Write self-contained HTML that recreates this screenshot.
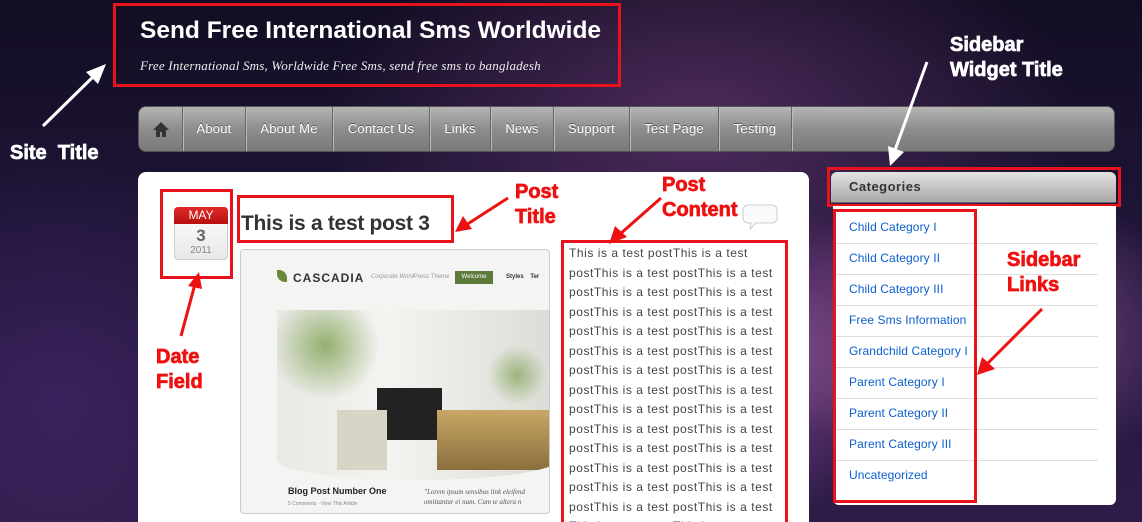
<!DOCTYPE html>
<html style="width:1142px;height:522px;overflow:hidden"><head><meta charset="utf-8"><style>
*{margin:0;padding:0;box-sizing:border-box}
body{width:1142px;height:522px;overflow:hidden;position:relative;font-family:"Liberation Sans",sans-serif;
background:
radial-gradient(ellipse 380px 220px at 650px 360px,rgba(230,150,220,.75),rgba(160,80,170,.3) 55%,transparent 80%),
radial-gradient(ellipse 300px 200px at 980px 330px,rgba(200,120,200,.6),transparent 75%),
radial-gradient(ellipse 500px 300px at 700px 120px,rgba(110,60,120,.6),transparent 75%),
radial-gradient(ellipse 300px 300px at 60px 400px,rgba(70,40,110,.6),transparent 80%),
linear-gradient(180deg,#120d22,#1e1436 40%,#2d1c48);}
.a{position:absolute}
.rb{position:absolute;border:3px solid #e8121a}
.ann{position:absolute;z-index:5;font-weight:bold;font-size:20px;line-height:25px;color:#ee1111;font-family:"Liberation Sans",sans-serif;letter-spacing:0;-webkit-text-stroke:0.7px currentColor}
.annw{color:#fff}
svg{z-index:5}
.nav{left:138px;top:106px;width:977px;height:46px;border-radius:8px;background:linear-gradient(#b5b5b5,#8d8d8d 50%,#7a7a7a);border:1px solid #555}
.nav span{position:absolute;top:0;height:44px;line-height:44px;color:#fff;font-size:13px;text-shadow:0 -1px 0 #555;border-right:1px solid #666;box-shadow:1px 0 0 #bbb;text-align:center;letter-spacing:.2px}
.side a{display:block;position:absolute;left:849px;color:#0b5fcf;font-size:12px;text-decoration:none;letter-spacing:.1px}
.sep{position:absolute;left:835px;width:263px;height:1px;background:#ddd}
.ct{position:absolute;left:569px;width:220px;font-size:12px;line-height:19.5px;color:#444;letter-spacing:.55px;white-space:nowrap;height:278px;overflow:hidden}
</style></head><body>
<div class="rb" style="left:113px;top:3px;width:508px;height:84px"></div>
<div class="a" style="left:140px;top:17px;color:#fff;font-size:24.5px;font-weight:bold">Send Free International Sms Worldwide</div>
<div class="a" style="left:140px;top:58px;color:#eee;font-size:13px;font-style:italic;font-family:'Liberation Serif',serif;letter-spacing:.2px">Free International Sms, Worldwide Free Sms, send free sms to bangladesh</div>

<div class="a nav">
<svg class="a" style="left:13px;top:14px" width="18" height="17"><path d="M9 1L1 9h3v7h4v-5h2v5h4V9h3z" fill="#333"/></svg>
<span style="left:0;width:44px"></span>
<span style="left:44px;width:63px">About</span>
<span style="left:107px;width:87px">About Me</span>
<span style="left:194px;width:97px">Contact Us</span>
<span style="left:291px;width:61px">Links</span>
<span style="left:352px;width:63px">News</span>
<span style="left:415px;width:76px">Support</span>
<span style="left:491px;width:89px">Test Page</span>
<span style="left:580px;width:73px">Testing</span>
</div>

<svg class="a" style="left:40px;top:62px" width="70" height="70"><line x1="3" y1="64" x2="58" y2="10" stroke="#fff" stroke-width="3"/><polygon points="66,2 46,10 58,22" fill="#fff"/></svg>
<div class="ann annw" style="left:10px;top:141px">Site&nbsp; Title</div>
<div class="ann annw" style="left:950px;top:33px">Sidebar<br>Widget Title</div>
<svg class="a" style="left:885px;top:60px" width="50" height="110"><line x1="42" y1="2" x2="10" y2="90" stroke="#fff" stroke-width="3"/><polygon points="5,106 3,86 19,92" fill="#fff"/></svg>

<div class="a" style="left:138px;top:172px;width:671px;height:360px;background:#fff;border-radius:8px"></div>
<div class="rb" style="left:160px;top:189px;width:73px;height:90px"></div>
<div class="a" style="left:174px;top:207px;width:54px;height:53px;border-radius:4px;border:1px solid #ccc;background:linear-gradient(#fff,#e8e8e8)"></div>
<div class="a" style="left:174px;top:207px;width:54px;height:17px;border-radius:4px 4px 0 0;background:linear-gradient(#e02a2a,#b80f0f);color:#fff;font-size:12px;text-align:center;line-height:17px">MAY</div>
<div class="a" style="left:174px;top:226px;width:54px;text-align:center;font-size:17px;font-weight:bold;color:#666">3</div>
<div class="a" style="left:174px;top:245px;width:54px;text-align:center;font-size:10px;color:#888">2011</div>
<div class="rb" style="left:237px;top:195px;width:217px;height:48px"></div>
<div class="a" style="left:241px;top:212px;font-size:21px;color:#333;font-weight:bold;letter-spacing:-.3px">This is a test post 3</div>
<div class="ann" style="left:515px;top:180px">Post<br>Title</div>
<svg class="a" style="left:452px;top:195px" width="60" height="40"><line x1="56" y1="3" x2="14" y2="30" stroke="#e11" stroke-width="3"/><polygon points="3,37 11,21 20,34" fill="#e11"/></svg>
<svg class="a" style="left:742px;top:202px" width="36" height="30"><path d="M6 3h24a5 5 0 015 5v8a5 5 0 01-5 5H14l-6 6 1-6H6a5 5 0 01-5-5V8a5 5 0 015-5z" fill="#fafafa" stroke="#ccc"/></svg>
<div class="ann" style="left:662px;top:173px">Post<br>Content</div>
<svg class="a" style="left:605px;top:195px" width="60" height="52"><line x1="56" y1="3" x2="14" y2="40" stroke="#e11" stroke-width="3"/><polygon points="4,49 10,31 22,42" fill="#e11"/></svg>

<div class="a" style="left:240px;top:249px;width:310px;height:265px;border:1px solid #ccc;border-radius:4px;background:#f4f4f2;overflow:hidden">
<div class="a" style="left:36px;top:20px;width:10px;height:12px;background:#6a8a3a;border-radius:0 8px 0 8px"></div>
<div class="a" style="left:52px;top:21px;font-size:12px;font-weight:bold;color:#333;letter-spacing:1px">CASCADIA</div>
<div class="a" style="left:130px;top:24px;font-size:6px;color:#999;font-style:italic">Corporate WordPress Theme</div>
<div class="a" style="left:214px;top:21px;width:38px;height:13px;background:#5c7a3c;color:#fff;font-size:6px;text-align:center;line-height:13px">Welcome</div>
<div class="a" style="left:265px;top:24px;font-size:6px;color:#333;font-weight:bold">Styles&nbsp;&nbsp;&nbsp;&nbsp;Ter</div>
<div class="a" style="left:36px;top:60px;width:280px;height:170px;background:linear-gradient(90deg,#e8e8e4,#f3f3f0 40%,#dcdcd6);border-radius:0 0 50% 50%/0 0 20px 20px;overflow:hidden">
<div class="a" style="left:100px;top:78px;width:65px;height:52px;background:#222"></div>
<div class="a" style="left:160px;top:100px;width:120px;height:60px;background:linear-gradient(#c9a866,#8a6f3e)"></div>
<div class="a" style="left:60px;top:100px;width:50px;height:60px;background:#d8d4c6"></div>
<div class="a" style="left:0;top:0;width:120px;height:90px;background:radial-gradient(circle at 40% 40%,rgba(110,150,60,.7),transparent 60%)"></div>
<div class="a" style="left:205px;top:30px;width:70px;height:70px;background:radial-gradient(circle,rgba(110,150,60,.6),transparent 60%)"></div>
</div>
<div class="a" style="left:47px;top:236px;font-size:9px;font-weight:bold;color:#222">Blog Post Number One</div>
<div class="a" style="left:47px;top:251px;font-size:5px;color:#888">5 Comments · View This Article</div>
<div class="a" style="left:183px;top:237px;font-size:7px;color:#555;font-style:italic;font-family:'Liberation Serif',serif;line-height:10px;white-space:nowrap">"Lorem ipsum sensibus link eleifend<br>omittantur ei nam. Cum te altera n</div>
</div>

<div class="rb" style="left:561px;top:240px;width:227px;height:290px"></div>
<div class="ct" style="top:244px">This is a test postThis is a test<br>postThis is a test postThis is a test<br>postThis is a test postThis is a test<br>postThis is a test postThis is a test<br>postThis is a test postThis is a test<br>postThis is a test postThis is a test<br>postThis is a test postThis is a test<br>postThis is a test postThis is a test<br>postThis is a test postThis is a test<br>postThis is a test postThis is a test<br>postThis is a test postThis is a test<br>postThis is a test postThis is a test<br>postThis is a test postThis is a test<br>postThis is a test postThis is a test<br>This is a test postThis is a test</div>

<svg class="a" style="left:175px;top:270px" width="30" height="70"><line x1="6" y1="66" x2="20" y2="14" stroke="#e11" stroke-width="3"/><polygon points="24,2 13,16 27,19" fill="#e11"/></svg>
<div class="ann" style="left:156px;top:345px">Date<br>Field</div>

<div class="rb" style="left:827px;top:167px;width:294px;height:40px"></div>
<div class="a" style="left:831px;top:172px;width:285px;height:31px;border-radius:6px 6px 0 0;background:linear-gradient(#e4e4e4,#a8a8a8);border-bottom:1px solid #666;font-size:13px;font-weight:bold;color:#333;padding-left:18px;line-height:29px;letter-spacing:.5px">Categories</div>
<div class="a" style="left:833px;top:206px;width:283px;height:299px;background:#fff;border-radius:0 0 6px 6px"></div>
<div class="side">
<a style="top:220px">Child Category I</a><a style="top:251px">Child Category II</a><a style="top:282px">Child Category III</a><a style="top:313px">Free Sms Information</a><a style="top:344px">Grandchild Category I</a><a style="top:375px">Parent Category I</a><a style="top:406px">Parent Category II</a><a style="top:437px">Parent Category III</a><a style="top:468px">Uncategorized</a>
</div>
<div class="sep" style="top:243px"></div><div class="sep" style="top:274px"></div><div class="sep" style="top:305px"></div><div class="sep" style="top:336px"></div><div class="sep" style="top:367px"></div><div class="sep" style="top:398px"></div><div class="sep" style="top:429px"></div><div class="sep" style="top:460px"></div>
<div class="rb" style="left:833px;top:209px;width:144px;height:294px"></div>
<div class="ann" style="left:1007px;top:248px">Sidebar<br>Links</div>
<svg class="a" style="left:972px;top:305px" width="75" height="75"><line x1="70" y1="4" x2="16" y2="58" stroke="#e11" stroke-width="3"/><polygon points="5,70 10,52 23,64" fill="#e11"/></svg>
</body></html>
